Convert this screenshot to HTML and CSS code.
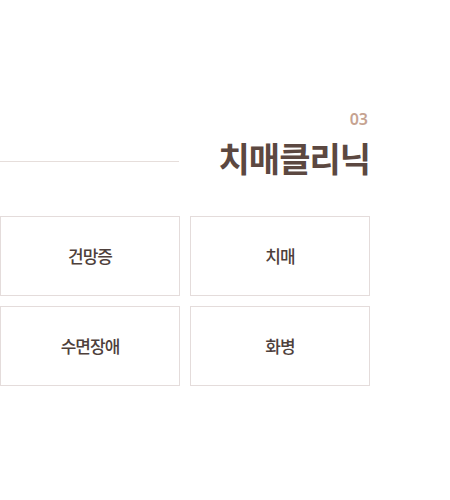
FILE: index.html
```html
<!DOCTYPE html>
<html lang="ko">

<head>
    <meta charset="UTF-8">
    <title>치매클리닉</title>
    <link rel="stylesheet" href="styles.css">
</head>

<body>
    <div class="clinic">
        <div class="head">
            <span class="num">03</span>
            <div class="title-row">
                <span class="line"></span>
                <h2 class="title">치매클리닉</h2>
            </div>
        </div>
        <ul class="list">
            <li>건망증</li>
            <li>치매</li>
            <li>수면장애</li>
            <li>화병</li>
        </ul>
    </div>
</body>

</html>
```

FILE: styles.css
```css
* {
    margin: 0;
    padding: 0;
    box-sizing: border-box;
}

body {
    background: #fff;
    font-family: "Noto Sans CJK KR", "Noto Sans", sans-serif;
}

.clinic {
    width: 370px;
    padding-top: 108px;
}

.head {
    display: flex;
    flex-direction: column;
    align-items: flex-end;
}

.num {
    font-family: "Noto Sans", sans-serif;
    font-size: 16px;
    font-weight: 600;
    line-height: 22px;
    color: #c6a391;
    padding-right: 2px;
}

.title-row {
    width: 100%;
    display: flex;
    align-items: center;
    gap: 40px;
    margin-top: 6px;
}

.line {
    flex: 1;
    height: 1px;
    margin-top: 6px;
    background: #e6dedb;
}

.title {
    font-size: 34px;
    font-weight: 700;
    line-height: 44px;
    letter-spacing: -1px;
    color: #5c4841;
}

.list {
    list-style: none;
    display: grid;
    grid-template-columns: 1fr 1fr;
    gap: 10px;
    margin-top: 36px;
}

.list li {
    height: 80px;
    border: 1px solid #e4dcdb;
    display: flex;
    align-items: center;
    justify-content: center;
    padding-bottom: 2px;
    font-size: 17px;
    font-weight: 500;
    letter-spacing: -1px;
    color: #4e403b;
}
```
